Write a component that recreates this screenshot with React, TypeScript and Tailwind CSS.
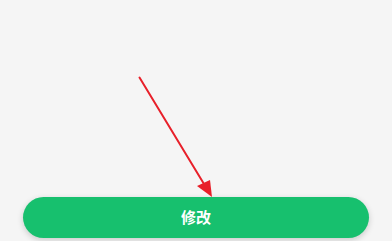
export default function App() {
  return (
    <div className="relative w-[392px] h-[241px] bg-[#f5f5f5] flex flex-col justify-end overflow-hidden" style={{ fontFamily: '"Noto Sans CJK SC", "Noto Sans", sans-serif' }}>
      <div className="px-[23px] pb-[3px]">
        <button className="w-full h-[41px] rounded-full bg-[#17c06e] text-white text-[15px] font-bold flex items-center justify-center shadow-[0_2px_6px_rgba(0,0,0,0.18)]">
          修改
        </button>
      </div>
      <svg className="absolute left-0 top-0 pointer-events-none" width="392" height="241" viewBox="0 0 392 241">
        <line x1="139.5" y1="77.5" x2="204" y2="184" stroke="#e8202a" strokeWidth="2" strokeLinecap="round" />
        <polygon points="212,197 197,186 210,180" fill="#e8202a" />
      </svg>
    </div>
  );
}
